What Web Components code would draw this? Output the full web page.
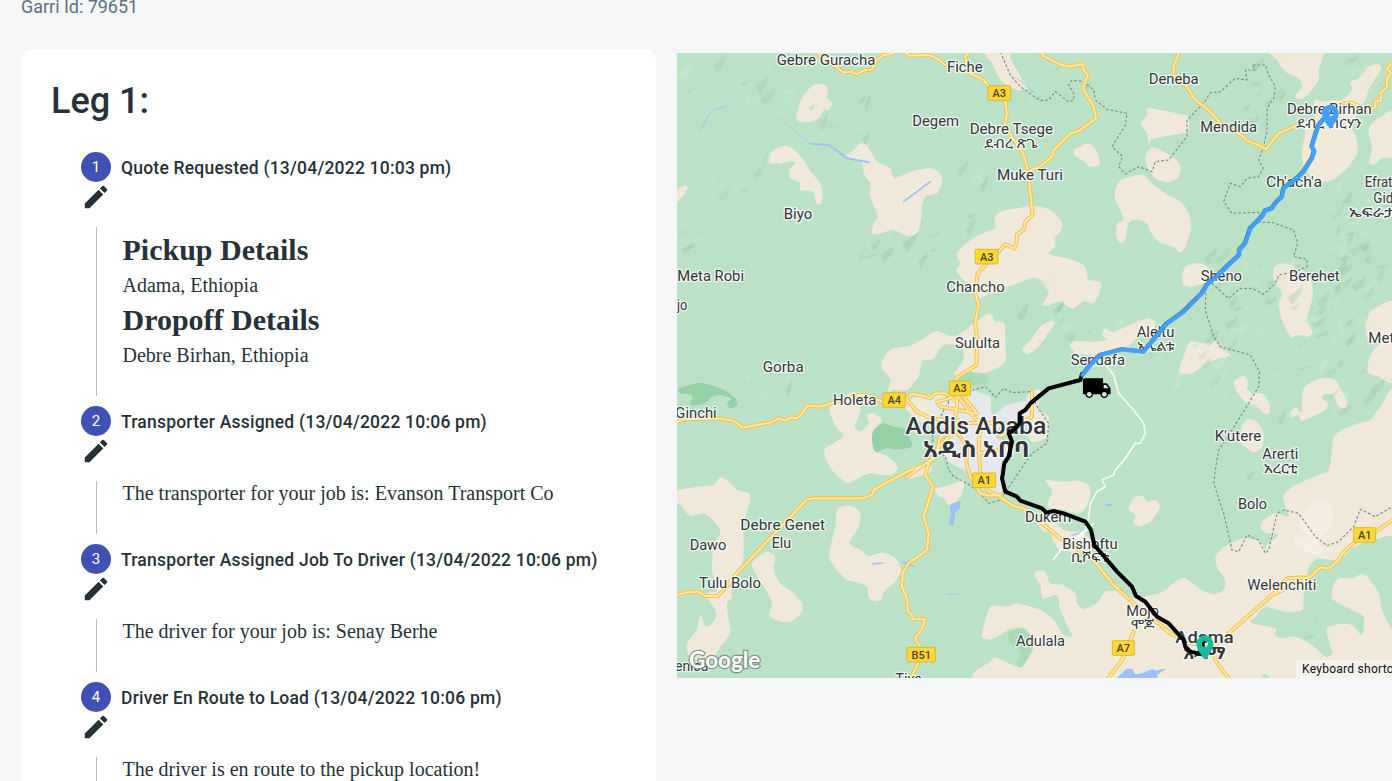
<!DOCTYPE html>
<html lang="en">
<head>
<meta charset="utf-8">
<title>Garri job tracking</title>
<style>
html,body{margin:0;height:100%;overflow:hidden;background:#f4f6f8}
</style>
</head>
<body>
<garri-page job="79651">
  <leg-card slot="leg" heading="Leg 1:">
    <leg-step number="1" label="Quote Requested (13/04/2022 10:03 pm)">
      <place-detail heading="Pickup Details">Adama, Ethiopia</place-detail>
      <place-detail heading="Dropoff Details">Debre Birhan, Ethiopia</place-detail>
    </leg-step>
    <leg-step number="2" label="Transporter Assigned (13/04/2022 10:06 pm)">The transporter for your job is: Evanson Transport Co</leg-step>
    <leg-step number="3" label="Transporter Assigned Job To Driver (13/04/2022 10:06 pm)">The driver for your job is: Senay Berhe</leg-step>
    <leg-step number="4" label="Driver En Route to Load (13/04/2022 10:06 pm)">The driver is en route to the pickup location!</leg-step>
  </leg-card>
  <route-map slot="map"></route-map>
</garri-page>
<script>
class GarriPage extends HTMLElement{
  constructor(){super();this.attachShadow({mode:'open'}).innerHTML=`<style>
:host{display:block;height:781px;overflow:hidden;font-family:Roboto,"Liberation Sans",sans-serif;color:#263238}
.id{height:49px;padding-left:21px;box-sizing:border-box;font-size:18px;line-height:27px;color:#5f7280}
.id span{display:block;margin-top:-7px;letter-spacing:-.03px}
header{display:flow-root;height:49px}
main{display:grid;grid-template-columns:635px 715px;column-gap:21px;padding-left:21px;align-items:start}
.map{padding-top:4px}
</style><header><div class="id"><span></span></div></header><main><slot name="leg"></slot><div class="map"><slot name="map"></slot></div></main>`;}
  connectedCallback(){this.shadowRoot.querySelector('span').textContent='Garri Id: '+this.getAttribute('job');}
}
class LegCard extends HTMLElement{
  constructor(){super();this.attachShadow({mode:'open'}).innerHTML=`<style>
:host{display:block;background:#fff;border-radius:12px;min-height:740px;padding:31px 30px 0;box-sizing:border-box}
h1{margin:0 0 30px;font-size:36px;font-weight:500;line-height:42px}
.steps{padding-left:30px}
</style><h1></h1><div class="steps"><slot></slot></div>`;}
  connectedCallback(){this.shadowRoot.querySelector('h1').textContent=this.getAttribute('heading');}
}
class LegStep extends HTMLElement{
  constructor(){super();this.attachShadow({mode:'open'}).innerHTML=`<style>
:host{display:block;margin-bottom:10px}
.row{display:flex;align-items:center;gap:10px;height:30px}
.dot{width:30px;height:30px;border-radius:50%;background:#3f51b5;color:#fff;font-size:15px;line-height:30px;text-align:center}
.label{font-size:17.5px;letter-spacing:.21px;font-weight:500;line-height:20px;padding-top:2px;white-space:nowrap}
svg{display:block;width:30px;height:30px;fill:#263238}
.body{margin:15px 0 0 15px;border-left:1px solid #bdbdbd;padding:1px 0 29px 25.5px;font:20px/23px "Liberation Serif",serif;white-space:nowrap}
</style><div class="row"><div class="dot"></div><div class="label"></div></div>
<svg viewBox="0 0 24 24"><path d="M3 17.25V21h3.75L17.81 9.94l-3.75-3.75L3 17.25zM20.71 7.04c.39-.39.39-1.02 0-1.41l-2.34-2.34a.996.996 0 0 0-1.41 0l-1.83 1.83 3.75 3.75 1.83-1.83z"/></svg>
<div class="body"><slot></slot></div>`;}
  connectedCallback(){this.shadowRoot.querySelector('.dot').textContent=this.getAttribute('number');this.shadowRoot.querySelector('.label').textContent=this.getAttribute('label');}
}
class PlaceDetail extends HTMLElement{
  constructor(){super();this.attachShadow({mode:'open'}).innerHTML=`<style>
:host{display:block;white-space:nowrap}
:host(:first-child){padding-top:4px}
:host(:last-child){margin-bottom:-5px}
h2{margin:0;font-size:30px;line-height:35px;font-weight:700}
p{margin:0;padding-top:1px;line-height:34px}
</style><h2></h2><p><slot></slot></p>`;}
  connectedCallback(){this.shadowRoot.querySelector('h2').textContent=this.getAttribute('heading');}
}

/* Map drawing: three units per pixel. Each entry is [origin x, origin y, points]. */
const LAND=[
[0,0,'362,185 375,145 405,108 440,102 452,118 450,145 466,160 455,180 440,180 430,200 400,216 365,214 357,200'],
[0,0,'275,325 290,300 325,287 350,297 380,330 405,370 430,400 437,440 430,463 418,458 408,425 370,420 368,398 340,385 338,360 355,340 345,333 310,340 280,340'],
[0,0,'508,318 530,300 550,280 568,285 585,310 600,335 640,355 652,385 700,365 760,355 790,372 795,400 780,430 745,440 735,470 732,510 720,550 690,558 650,540 610,550 585,550 590,520 602,495 585,455 578,430 580,400 560,370 555,340'],
[0,0,'-20,430 20,408 33,412 20,435 -10,465'],
[720,0,'200,0 225,40 240,70 255,95 300,120 335,115 320,95 300,60 280,25 278,-10'],
[720,0,'470,300 490,290 510,280 530,290 545,320 547,345 520,350 495,330 475,318'],
[1425,0,'-35,220 -15,195 -10,175 50,185 100,195 112,215 105,245 60,255 0,268 -10,283 -15,250'],
[1425,0,'-20,320 -5,295 20,297 60,320 85,345 80,380 50,397 10,385 -15,350'],
[720,0,'595,420 610,390 640,380 680,375 705,400 745,430 795,460 818,500 820,545 800,600 785,605 770,590 725,575 700,545 690,520 660,510 635,520 625,570 610,578 598,560 600,520 620,510 610,480 595,450'],
[720,0,'120,610 160,570 200,548 235,535 232,505 250,485 300,475 350,468 400,480 435,515 430,545 412,565 415,590 395,612 450,625 500,645 510,670 515,690 550,695 550,720 530,760 500,755 465,775 430,755 385,768 378,758 395,730 370,690 340,685 290,705 250,715 210,735 180,745 160,710 130,680 118,660 130,640'],
[0,0,'613,950 625,915 650,895 700,887 740,865 780,842 830,860 885,825 930,792 945,795 955,815 982,820 985,880 982,940 910,975 885,965 830,975 860,930 850,890 800,885 770,925 735,935 725,980 690,1020 650,1020 632,1025 640,990'],
[720,630,'317,265 345,235 370,200 402,183 413,190 390,225 360,265 330,282'],
[720,630,'458,255 480,243 530,245 570,240 555,225 565,205 590,215 650,190 690,175 715,185 705,215 660,235 620,270 550,285 480,280'],
[1425,0,'350,-5 375,30 400,65 440,85 450,110 435,130 430,142 450,147 480,120 500,90 500,60 515,15 515,-5'],
[1425,0,'487,150 510,155 540,150 570,150 600,120 595,95 620,85 650,50 680,42 687,60 670,85 650,120 640,150 620,175 600,230 615,270 615,310 590,350 550,385 520,395 480,380 455,350 450,300 460,250 455,220 485,200'],
[1425,0,'655,225 680,205 730,185 730,315 690,325 670,342 652,340 660,290 650,250'],
[1425,630,'90,50 100,20 130,10 155,12 170,30 160,65 120,80 95,75'],
[1425,630,'368,20 400,10 430,20 465,40 482,80 482,110 475,140 465,180 482,215 470,230 440,225 415,230 390,180 380,130 390,100 365,60'],
[1425,630,'640,200 650,165 665,148 730,133 730,359 680,350 648,335 650,300 665,270 690,245 650,240'],
[1425,630,'82,325 100,275 115,245 160,250 190,243 205,265 237,285 190,300 150,320 120,340 85,342'],
[1425,630,'245,365 275,347 288,365 285,385 300,400 330,400 352,430 353,458 335,460 310,435 280,425 255,395'],
[1425,630,'450,400 465,375 505,355 550,360 570,395 585,420 580,443 560,440 545,410 520,400 510,415 527,430 520,450 480,470 450,483 440,465 420,472 412,460 430,443 450,455'],
[1425,630,'265,520 275,490 290,477 315,485 335,520 330,560 305,577 280,560 265,545'],
[1425,1260,'740,-205 680,-180 655,-150 620,-140 570,-120 545,-100 540,-60 530,0 500,15 430,45 395,75 400,110 410,140 370,130 335,150 325,175 345,190 378,195 345,225 340,240 325,215 280,205 245,215 210,235 190,265 200,300 220,330 215,360 185,372 150,360 100,325 70,335 40,360 0,375 -55,385 -95,365 -140,365 -165,400 -205,417 -225,400 -230,370 -265,345 -305,340 -320,305 -345,303 -352,320 -335,345 -327,385 -285,375 -275,420 -245,485 -240,500 -265,495 -295,450 -335,420 -405,400 -435,410 -485,410 -505,470 -510,500 -480,508 -425,478 -385,475 -360,520 -390,590 -430,580 -465,563 -480,570 -465,640 740,640'],
[0,1260,'-10,65 60,50 110,45 130,22 150,30 180,60 218,72 215,110 200,160 200,240 195,280 160,330 165,380 150,400 155,450 160,490 130,530 110,560 60,570 35,555 30,520 60,480 65,445 75,440 85,470 105,460 118,430 95,390 90,370 120,360 105,300 110,230 130,190 120,165 80,130 40,137 10,105 -10,95'],
[0,1260,'225,290 240,265 260,250 275,245 295,260 290,300 310,340 350,370 375,400 375,425 350,450 325,457 285,445 277,430 285,400 270,365'],
[0,1260,'480,120 500,107 530,110 550,130 545,170 518,220 550,240 575,258 610,248 650,260 673,300 650,340 625,360 610,390 590,393 575,380 570,350 545,338 510,330 480,300 457,260 465,210 475,170'],
[0,630,'458,455 470,430 530,395 550,440 545,470 533,500 550,515 575,490 568,465 590,460 615,480 600,500 585,540 595,575 625,585 655,610 660,630 640,645 610,645 575,640 515,670 490,655 465,630 443,590 445,565 470,550 500,525 480,505'],
[720,1260,'385,30 430,35 490,33 518,50 518,90 490,130 440,120 400,115 390,105 400,80 405,60'],
[720,1260,'55,55 90,48 140,30 135,70 110,105 95,105 80,85 60,75'],
[720,1260,'640,100 655,80 680,80 690,95 715,90 728,105 725,120 700,155 670,168 650,160 655,135 635,120'],
[720,1260,'360,150 400,145 440,180 500,190 530,225 490,245 430,240 410,215 400,190 375,180'],
[720,630,'-40,430 20,405 90,410 100,470 60,500 0,480'],
[720,630,'330,410 370,390 365,450 395,470 390,530 345,545 330,500'],
[720,1260,'-15,-10 40,-10 40,5 0,20 -30,25']
];
const HOLES=[
[1425,1260,'740,215 650,215 600,235 575,260 540,270 500,265 470,290 465,320 455,380 450,420 400,425 340,412 310,440 295,455 320,465 370,475 370,495 390,505 430,500 480,525 520,560 540,550 530,510 525,475 560,462 600,465 630,495 635,440 600,420 545,390 540,370 545,345 560,325 600,325 630,312 650,325 680,370 690,420 715,470 740,500'],
[1425,1260,'325,640 335,612 352,620 352,640']];
const CITY=[
[720,630,'20,410 60,415 110,400 160,385 190,400 220,410 225,465 270,435 330,425 335,470 310,495 250,500 235,530 275,560 250,620 255,690 235,705 200,690 170,650 130,625 90,600 75,560 90,530 70,490 40,440'],
[1425,1260,'60,505 100,485 180,480 200,500 200,530 130,545 80,530']];
const PALE=[[1425,1260,'445,150 480,95 530,98 542,150 500,215 455,190'],[1425,1260,'425,210 470,200 510,230 500,255 440,235']];
const PARK=[
[0,630,'5,385 40,375 70,368 110,378 150,395 175,415 180,435 160,445 150,430 160,415 130,405 105,410 85,430 60,435 40,435 45,405 10,400'],
[0,630,'585,540 590,510 620,490 650,500 680,505 695,530 705,560 660,568 630,565 595,575']];
const PARK2=[[720,1260,'275,490 320,475 348,510 345,545 315,590 300,580 310,545 280,520'],[720,630,'120,360 135,340 200,340 212,370 160,375']];
const WATER=[
[720,1260,'100,105 130,95 128,115 115,130 110,165 95,160 102,135'],[720,1260,'567,102 585,102 577,110'],
[720,1260,'600,635 625,600 645,597 655,612 680,608 700,600 715,600 715,635'],[1425,1260,'-10,612 20,600 40,598 0,622']];
const RIVER=[
[0,0,'70,240 90,205 105,182 148,170',3],[0,0,'298,198 350,240 395,275',2],[0,0,'400,281 455,285 480,302 510,325 575,337',6],[0,0,'680,455 720,425 760,395',5],
[720,0,'300,85 325,105 355,132',3],[720,1260,'90,373 133,373',3],[720,1260,'465,195 490,190',5],[0,1260,'587,282 617,279',4],[0,1260,'675,275 710,290',4]];
const ROADS=[
[0,0,'415,5 445,25 500,68 520,65 540,72 560,62 585,58 600,30 620,15 645,12 665,0'],[0,0,'680,5 700,17 755,15 780,25 805,45'],
[720,0,'160,5 145,20 150,65 200,90 215,110 245,130 265,150 270,195 262,225 285,260 318,310 330,350 337,400 347,495 325,515 320,540 300,553 298,580 293,595 265,583 245,605 210,640 182,670 175,730 185,765 175,815 180,870 178,945 118,985 120,1020'],
[720,0,'370,5 380,18 425,42 455,50 497,42 500,60 513,75 500,105 500,120 530,170 538,205 485,243 460,250 410,300 405,320 375,345 335,365'],
[1425,0,'82,5 65,50 65,75 105,110 130,150 155,168 180,190 200,215 245,243 275,260 285,273 320,285 342,298 380,250 430,228'],
[1425,0,'725,35 705,55 717,70 705,85 705,110 685,130 688,150 670,155 670,172 640,178 600,158 575,160'],
[0,630,'-10,490 20,478 120,475 170,482 197,503 285,487 305,475 325,482 345,472 360,475 375,462 390,437 430,440 470,428 540,405 570,405 615,425 650,420 690,415 705,402 740,408 760,415 775,400 805,400 820,410 840,425'],
[0,630,'690,420 720,455 760,475 810,480'],
[0,1260,'-5,377 25,368 65,365 85,378 122,378 150,350 165,325 390,88 415,85 555,85 585,75 592,58 690,5 740,-15 780,-40 785,-70 830,-110 840,-150'],
[0,1260,'755,-20 745,15 768,50 740,140 755,190 750,240 720,262 695,280 677,310 675,350 690,385 693,425 705,435 705,447 745,448 735,475 715,505 735,540 720,585 700,630'],
[720,630,'120,400 120,440 110,500 150,560 148,610 160,650 190,700 215,707 250,705'],
[720,630,'125,410 155,455 190,490 185,560 190,640 210,690 240,705 290,738 320,745 375,790 430,835'],
[720,630,'140,410 180,460'],[720,630,'100,415 60,425 70,440 175,460'],
[720,630,'345,395 345,470 310,490 180,488 120,490 70,530 55,590 -30,650'],
[720,630,'185,580 240,570'],[720,630,'250,530 290,500'],
[720,1260,'430,205 530,270 545,290 590,345 650,400 700,450 725,460 760,490 815,520 895,525 940,485 1065,375'],
[1425,1260,'360,375 405,325 455,322'],[1425,1260,'360,375 475,320 505,292 530,295 560,270 575,245 610,215 670,185 715,155 725,145'],
[1425,1260,'180,520 190,570 210,600 240,635'],[720,1260,'565,635 605,585 620,560 650,485']];
const MINOR=[[720,630,'570,320 590,345 605,400 650,450 680,490 685,520 670,550 655,550 625,595 595,630 590,645 555,660 565,680 540,695 520,730 515,770 505,810 430,870 410,898'],[720,630,'480,840 530,790']];
const BORDER=[
[720,0,'250,5 280,75 310,110 370,152 395,150 415,125 455,155 470,150 470,130 455,105 465,90 500,95 530,120 535,150 570,178 630,190 625,225 585,290 617,320 605,350 625,372 665,350 705,365 715,335 755,330 810,260 810,210 860,160 880,128 910,125 955,85 990,90 985,60 1015,60 1005,45 1045,45 1055,75 1075,110 1070,145 1050,175 1050,240 1040,290 1025,330 1038,355 1025,380 990,385 970,410 940,400 920,455 945,490 1025,487 1030,517 1065,517 1130,540 1142,580 1130,620 1170,628 1170,650 1135,665 1085,675 1075,700 1040,733 1005,715 970,715 935,745 885,700'],
[1425,0,'162,700 160,780 185,860 205,890 295,915 322,965 320,1010 290,1060 240,1140 200,1200 190,1260 185,1300 215,1390 240,1500 260,1505 285,1455 320,1470 340,1510 350,1500 375,1390 395,1380 440,1390 490,1460 525,1487 560,1475 605,1430 625,1378 670,1400 725,1368'],
[720,630,'95,430 90,410 150,395 205,380 220,395 235,412 260,385 285,398 340,395 360,440 395,490 390,550 345,580 310,630 250,720 215,730 180,690 150,670 110,650 95,630 85,590 50,560 45,530 80,450 95,430']];
const DONE=[720,630,'495,342 490,360 395,385 340,430 325,450 308,460 308,490 300,500 275,520 285,545 275,590 262,610 258,640 255,655 265,695 300,710 310,722 375,745 388,758 410,753 440,760 505,785 522,810 532,855 600,935 645,980 657,1008 685,1025 720,1070 755,1090 800,1140 805,1160 820,1175 855,1183'];
const AHEAD=[1425,0,'530,190 500,225 490,255 480,290 487,303 480,325 455,365 440,380 395,415 390,440 370,460 360,475 340,482 330,500 295,535 280,580 262,600 262,615 230,645 215,660 165,705 150,730 115,765 95,785 60,810 45,820 0,875 -25,905 -55,902 -90,898 -155,915 -185,945 -208,975'];
/* [text, x, baseline, width, size, weight] */
const LABELS=[
['Gebre Guracha',299,46,296],['Fiche',810,65,107],['Degem',706,227,140],['Debre Tsege',878,252,250],['ደብረ ጽጌ',922,295,160,38],['Muke Turi',960,389,198],
['Deneba',1415,101,150],['Mendida',1570,245,170],['Debre Birhan',1830,192,254],['ደብረ ብርሃን',1858,234,196,38],["Ch'ach'a",1767,412,168],
['Efrata',2063,412,105],['Gidim',2089,458,105],['ኤፍራታና',2015,502,165,38],['Biyo',320,506,86],['Meta Robi',1,693,200],['jo',0,781,31],['Gorba',257,967,123],
['Ginchi',-5,1105,124],['Holeta',468,1064,130],['Chancho',808,725,175],['Sululta',834,895,135],['Sendafa',1181,945,163],['Aleltu',1379,861,113],['አሌልቱ',1380,903,112,38],
['Sheno',1571,694,124],['Berehet',1836,693,152],['Metehara',2074,878,190],["K'utere",1613,1174,140],['Arerti',1756,1226,108],['አረርቲ',1760,1270,102,38],['Bolo',1683,1377,87],
['Debre Genet',190,1439,254],['Elu',284,1495,58],['Dawo',38,1499,110],['Tulu Bolo',66,1615,186],['enisa',-6,1863,100],['Tiya',655,1902,80],['Dukem',1044,1415,139],
['Bishoftu',1156,1496,166],['ቢሾፍቱ',1182,1537,115,38],['Mojo',1348,1698,98],['ሞጆ',1362,1738,70,38],['Adulala',1017,1789,147],['Welenchiti',1711,1620,207],
['Addis Ababa',685,1152,423,70,500],['አዲስ አበባ',738,1221,320,66,700],['Adama',1495,1778,175,51,500],['አዳማ',1518,1826,128,50,700]];
const SHIELDS=[['A3',933,107,68],['A3',895,598,68],['A3',817,993,64],['A4',618,1028,67],['A1',887,1269,69],['A1',2030,1433,66],['A7',1306,1772,66],['B51',690,1792,85]];

const parse=([x,y,s])=>s.split(' ').map(p=>{const q=p.split(',');return[+q[0]+x,+q[1]+y]});
const line=a=>'M'+parse(a).map(p=>p.join(' ')).join('L');
const blob=a=>{const p=parse(a),n=p.length;let d='M'+p[0];
  for(let i=0;i<n;i++){const a0=p[(i+n-1)%n],b=p[i],c=p[(i+1)%n],e=p[(i+2)%n],k=.13;
    d+=`C${b[0]+(c[0]-a0[0])*k} ${b[1]+(c[1]-a0[1])*k} ${c[0]-(e[0]-b[0])*k} ${c[1]-(e[1]-b[1])*k} ${c[0]} ${c[1]}`;}
  return d+'Z';};
const blobs=(set,fill,extra='')=>`<path fill="${fill}" ${extra} d="${set.map(blob).join('')}"/>`;
/* small slivers of relief shading, grouped around the hilly areas */
const relief=()=>{let s=41;const r=()=>(s=(s*16807)%2147483647)/2147483647;
  const zones=[[170,90,170,90,18],[200,370,120,80,6],[480,190,90,80,8],[650,580,110,60,14],[860,460,60,110,9],[1130,100,90,60,6],[1020,730,140,80,6],[1260,850,120,40,6],[1750,110,60,130,18],[2060,520,110,110,30],[1780,760,210,140,46],[1530,930,120,120,18],[2020,730,120,160,32],[1880,1030,200,90,18],[60,560,70,60,4],[1620,1330,90,90,4],[1900,1730,60,40,3],[2030,90,80,70,8],[300,1020,150,40,3]];
  let o='';for(const[x,y,w,h,n]of zones)for(let i=0;i<n;i++){const a=x+(r()*2-1)*w,b=y+(r()*2-1)*h,u=14+r()*34,v=10+r()*28;
    o+=`<path fill="${r()>.5?'#d3edd2':'#93c2a5'}" opacity="${(.14+r()*.22).toFixed(2)}" d="M${a} ${b}l${u} ${-v}l${-u*.2} ${v*.9}l${-u*.5} ${v*.7}z"/>`;}
  return o;};
const PIN='M12 2C8.13 2 5 5.13 5 9c0 5.25 7 13 7 13s7-7.75 7-13c0-3.87-3.13-7-7-7zm0 9.5a2.5 2.5 0 1 1 0-5 2.5 2.5 0 0 1 0 5z';

class RouteMap extends HTMLElement{
  constructor(){super();const roads=ROADS.map(line).join(''),j='fill="none" stroke-linejoin="round" stroke-linecap="round"';
  this.attachShadow({mode:'open'}).innerHTML=`<style>
:host{display:block;position:relative;width:715px;height:625px;overflow:hidden;background:#bbe2c6}
svg{display:block;width:715px;height:625px}
text{font-family:Roboto,"Noto Sans Ethiopic","Liberation Sans",sans-serif}
.l{fill:#34383c;stroke:#fff;stroke-opacity:.75;stroke-width:8;paint-order:stroke;stroke-linejoin:round}
.keys{position:absolute;left:619px;top:607px;width:150px;height:18px;padding-left:6px;background:#f5f3f0e6;font:12px/19px Roboto,sans-serif;letter-spacing:.27px;color:#111;white-space:nowrap}
</style><svg viewBox="0 9 2145 1875" preserveAspectRatio="none">
${blobs(LAND,'#f0e8d8')}${blobs(HOLES,'#bbe2c6')}${blobs(PALE,'#f5eee2')}${blobs(PARK,'#94d2a5')}${blobs(PARK2,'#a7d9b2','opacity=".8"')}${blobs(CITY,'#e6e8ec')}
${relief()}
${blobs(WATER,'#9cc0f9')}${RIVER.map(r=>`<path ${j} stroke="#9fc3f5" stroke-width="${r[3]}" d="${line(r)}"/>`).join('')}
<path ${j} stroke="#fff" stroke-width="5" opacity=".85" d="${MINOR.map(line).join('')}"/>
<path fill="none" stroke="#7f8f86" stroke-width="3.5" stroke-dasharray="8 6" d="${BORDER.map(line).join('')}"/>
<path ${j} stroke="#f5c350" stroke-width="12" d="${roads}"/><path ${j} stroke="#ffe9a6" stroke-width="5.5" d="${roads}"/>
${SHIELDS.map(([t,x,y,w])=>`<rect x="${x}" y="${y}" width="${w}" height="44" rx="3" fill="#fdd835" stroke="#d9b83a" stroke-width="3"/><text x="${x+w/2}" y="${y+34}" font-size="33" font-weight="500" text-anchor="middle" fill="#4c4321">${t}</text>`).join('')}
${LABELS.map(([t,x,y,w,s=44,b=400])=>`<text class="l" x="${x}" y="${y}" font-size="${s}" font-weight="${b}" textLength="${w}" lengthAdjust="spacingAndGlyphs">${t}</text>`).join('')}
<path ${j} stroke="#000" stroke-width="12" d="${line(DONE)}"/>
<path ${j} stroke="#1f2d38" stroke-width="11" opacity=".7" transform="translate(-2 -1)" d="${line(AHEAD)}"/><path ${j} stroke="#429ffb" stroke-width="13" d="${line(AHEAD)}"/>
<path fill="#429ffb" transform="translate(1916.5 157) scale(3.63)" d="${PIN}"/>
<path d="M1583 1773a10 10 0 0 0 0 20z"/>
<path fill="#1abc9c" transform="translate(1540 1749.5) scale(3.65)" d="${PIN}"/>
<g transform="translate(1214 970) scale(3.77 3.7)"><path d="M20 8h-3V4H2.5C1.700 4 1 4.700 1 5.500V17h2c0 1.660 1.340 3 3 3s3-1.340 3-3h6c0 1.660 1.340 3 3 3s3-1.340 3-3h2v-5l-3-4z"/><path fill="#d5eadb" d="M17.500 9.500h2l1.960 2.500h-3.960z"/><circle cx="6" cy="17" r="1.900" fill="#d5eadb"/><circle cx="18" cy="17" r="1.900" fill="#d5eadb"/></g>
<text x="36" y="1854" font-size="70" textLength="214" lengthAdjust="spacingAndGlyphs" fill="#fff" stroke="#6d7d75" stroke-width="8" stroke-opacity=".75" paint-order="stroke" style="font-family:Lato,sans-serif;font-weight:700">Google</text>
</svg><div class="keys">Keyboard shortcuts</div>`;}
}
customElements.define('garri-page',GarriPage);
customElements.define('leg-card',LegCard);
customElements.define('leg-step',LegStep);
customElements.define('place-detail',PlaceDetail);
customElements.define('route-map',RouteMap);
</script>
</body>
</html>
